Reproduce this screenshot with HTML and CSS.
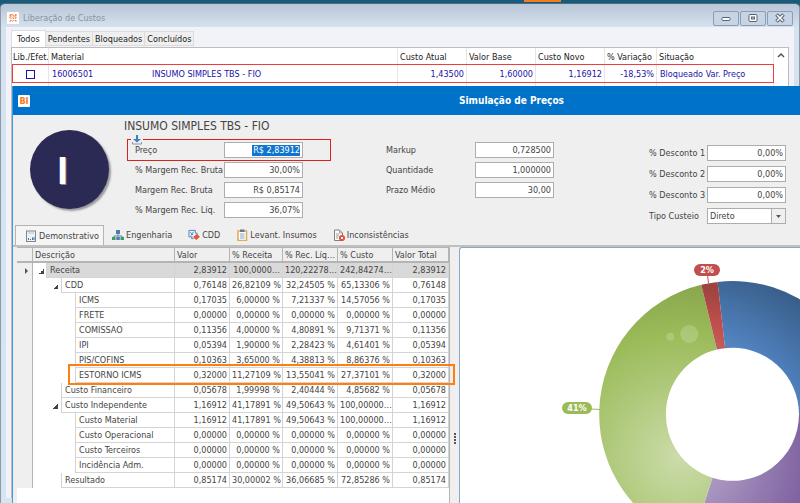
FILE: index.html
```html
<!DOCTYPE html>
<html lang="pt-BR">
<head>
<meta charset="utf-8">
<title>Liberação de Custos</title>
<link rel="stylesheet" href="styles.css">
</head>
<body>
<div class="desktop">
  <div class="app-strip"><span class="app-strip-mark"></span></div>

  <section class="window">
    <header class="window-title">
      <svg class="window-logo" viewBox="0 0 12 12" aria-hidden="true">
        <rect width="12" height="12" rx="1" fill="#fff"/>
        <path d="M2.500 2.500l2 2M5 2l2 2.500M8 2.500l1.500 1M2.500 5.500l2 1M5.500 5l1.500 2M9.500 5l-1.500 1.500M2.500 9.500l2-1.500M5.500 9.500l1-1.500M8 8l1.500 1.500M4.500 2.500l-2 2M9.500 2.500l-2 2" stroke="#f08a52" stroke-width="1.200" fill="none"/>
      </svg>
      <h1>Liberação de Custos</h1>
      <div class="window-buttons">
        <button type="button" aria-label="Minimizar"><svg viewBox="0 0 12 10"><rect x="2" y="4.500" width="8" height="3" rx="1" fill="#fff" stroke="#596375"/></svg></button>
        <button type="button" aria-label="Maximizar"><svg viewBox="0 0 12 10"><rect x="2" y="1.500" width="8" height="7" rx="1" fill="#fff" stroke="#596375"/><rect x="4.500" y="4" width="3" height="2" fill="#c5d2e0" stroke="#596375"/></svg></button>
        <button type="button" aria-label="Fechar"><svg viewBox="0 0 12 10"><path d="M2.500 1.500l7 7M9.500 1.500l-7 7" stroke="#596375" stroke-width="3.600"/><path d="M3 2l6 6M9 2l-6 6" stroke="#fff" stroke-width="1.600"/></svg></button>
      </div>
    </header>

    <div class="window-body">
      <nav class="filter-tabs">
        <button type="button" class="active">Todos</button>
        <button type="button">Pendentes</button>
        <button type="button">Bloqueados</button>
        <button type="button">Concluídos</button>
      </nav>
      <div class="cost-panel">
        <div class="cost-list">
          <table class="cost-table">
            <colgroup><col class="c-check"><col><col class="c-cost"><col class="c-cost"><col class="c-cost"><col class="c-var"><col class="c-status"></colgroup>
            <thead>
              <tr><th class="tight">Lib./Efet.</th><th>Material</th><th>Custo Atual</th><th>Valor Base</th><th>Custo Novo</th><th>% Variação</th><th>Situação</th></tr>
            </thead>
            <tbody>
              <tr>
                <td class="check"><input type="checkbox" aria-label="Liberar 16006501"></td>
                <td><span class="code">16006501</span>INSUMO SIMPLES TBS - FIO</td>
                <td class="num">1,43500</td><td class="num">1,60000</td><td class="num">1,16912</td><td class="num">-18,53%</td><td>Bloqueado Var. Preço</td>
              </tr>
              <tr class="blank"><td></td><td></td><td></td><td></td><td></td><td></td><td></td></tr>
            </tbody>
          </table>
          <span class="mark mark-row"></span>
        </div>
        <div class="scroll-column"><svg viewBox="0 0 8 6"><path d="M1 5l3-3 3 3" fill="none" stroke="#555" stroke-width="1.500"/></svg></div>
      </div>
    </div>
  </section>

  <section class="dialog">
    <header class="dialog-title">
      <span class="bi-logo">BI</span>
      <h2>Simulação de Preços</h2>
    </header>

    <div class="summary">
      <div class="avatar">I</div>
      <div class="product">
        <h3>INSUMO SIMPLES TBS - FIO</h3>
        <div class="fields">
          <label for="preco">Preço</label><input id="preco" class="selected" value="R$ 2,83912">
          <label for="mrb">% Margem Rec. Bruta</label><input id="mrb" value="30,00%">
          <label for="mb">Margem Rec. Bruta</label><input id="mb" value="R$ 0,85174">
          <label for="mrl">% Margem Rec. Líq.</label><input id="mrl" value="36,07%">
          <span class="mark mark-price"></span>
          <svg class="down-arrow" viewBox="0 0 12 10" aria-hidden="true"><rect width="12" height="10" fill="#efefef"/><path d="M5 0h2v4h3L6 7.500 2 4h3z" fill="#3f7fbd"/><path d="M1.500 7v2h9V7" fill="none" stroke="#8796a8"/></svg>
        </div>
      </div>
      <div class="fields fields-mid">
        <label for="mk">Markup</label><input id="mk" value="0,728500">
        <label for="qt">Quantidade</label><input id="qt" value="1,000000">
        <label for="pm">Prazo Médio</label><input id="pm" value="30,00">
      </div>
      <div class="fields fields-right">
        <label for="d1">% Desconto 1</label><input id="d1" value="0,00%">
        <label for="d2">% Desconto 2</label><input id="d2" value="0,00%">
        <label for="d3">% Desconto 3</label><input id="d3" value="0,00%">
        <label for="tc">Tipo Custeio</label>
        <span class="select-box"><select id="tc"><option>Direto</option></select><svg class="caret" viewBox="0 0 14 14" aria-hidden="true"><rect width="14" height="14" fill="#efefef"/><path d="M.5 0v14" stroke="#adadad"/><path d="M5 6h5L7.500 9z" fill="#555"/></svg></span>
      </div>
    </div>

    <nav class="view-tabs">
      <button type="button" class="active"><svg viewBox="0 0 12 12"><rect x="1.500" y="1" width="9" height="10.500" fill="#eef1f5" stroke="#7d8590"/><path d="M3 3h6" stroke="#b9c0ca"/><path d="M3.500 10V8M5.500 10V9M7.500 10V7.500M9 10V7" stroke="#3d6ea8"/></svg>Demonstrativo</button>
      <button type="button"><svg viewBox="0 0 12 12"><rect x="4" y="1" width="4" height="4" fill="#4a7db5"/><path d="M6 5v2M2 9V7h8v2" fill="none" stroke="#6d7f8f"/><rect x="0" y="8" width="3.500" height="3" fill="#3f9a6a"/><rect x="4.300" y="8" width="3.500" height="3" fill="#4a7db5"/><rect x="8.500" y="8" width="3.500" height="3" fill="#3f9a6a"/></svg>Engenharia</button>
      <button type="button"><svg viewBox="0 0 13 12"><path d="M1 1h7v3h2v3M1 1v7h4" fill="#e3eef8" stroke="#4f86bd"/><path d="M2.500 3l3 3M6 2.500l-3 4M4 8v2h2" fill="none" stroke="#4f86bd"/><path d="M9.500 5L13 8 9 11.500 5.500 8.500z" fill="#e0573a"/></svg>CDD</button>
      <button type="button"><svg viewBox="0 0 12 12"><rect x="2" y="2" width="8.500" height="9.500" fill="#fff" stroke="#e3ac4c" stroke-width="1.500"/><rect x="4" y="0.500" width="4.500" height="2.500" fill="#6d7783"/><path d="M4 5h4.500M4 7h4.500M4 9h4.500" stroke="#7fa5d0"/></svg>Levant. Insumos</button>
      <button type="button"><svg viewBox="0 0 12 12"><path d="M1.500 1h5l3 3v7.500h-8z" fill="#fafafa" stroke="#808080"/><path d="M6.500 1v3h3M3 5h3M3 7h3M3 9h2" fill="none" stroke="#a0a0a0"/><circle cx="9" cy="9" r="3" fill="#dd4b30"/><path d="M7.800 7.800l2.400 2.400M10.200 7.800l-2.400 2.400" stroke="#fff"/></svg>Inconsistências</button>
    </nav>

    <div class="content">
      <div class="tree-panel">
        <table class="tree">
          <colgroup><col class="t-ind"><col class="t-desc"><col class="t-a"><col class="t-b"><col class="t-a"><col class="t-a"><col class="t-c"></colgroup>
          <thead><tr><th></th><th>Descrição</th><th>Valor</th><th>% Receita</th><th>% Rec. Líq…</th><th>% Custo</th><th>Valor Total</th></tr></thead>
          <tbody>
            <tr class="current"><td><svg class="pointer" viewBox="0 0 4 6"><path d="M0 0l3 3-3 3z" fill="#555"/></svg></td><td class="l0 open"><span>Receita</span></td><td>2,83912</td><td>100,0000…</td><td>120,22278…</td><td>242,84274…</td><td>2,83912</td></tr>
            <tr><td></td><td class="l1 open"><span>CDD</span></td><td>0,76148</td><td>26,82109 %</td><td>32,24505 %</td><td>65,13306 %</td><td>0,76148</td></tr>
            <tr><td></td><td class="l2"><span>ICMS</span></td><td>0,17035</td><td>6,00000 %</td><td>7,21337 %</td><td>14,57056 %</td><td>0,17035</td></tr>
            <tr><td></td><td class="l2"><span>FRETE</span></td><td>0,00000</td><td>0,00000 %</td><td>0,00000 %</td><td>0,00000 %</td><td>0,00000</td></tr>
            <tr><td></td><td class="l2"><span>COMISSAO</span></td><td>0,11356</td><td>4,00000 %</td><td>4,80891 %</td><td>9,71371 %</td><td>0,11356</td></tr>
            <tr><td></td><td class="l2"><span>IPI</span></td><td>0,05394</td><td>1,90000 %</td><td>2,28423 %</td><td>4,61401 %</td><td>0,05394</td></tr>
            <tr><td></td><td class="l2"><span>PIS/COFINS</span></td><td>0,10363</td><td>3,65000 %</td><td>4,38813 %</td><td>8,86376 %</td><td>0,10363</td></tr>
            <tr><td></td><td class="l2"><span>ESTORNO ICMS</span></td><td>0,32000</td><td>11,27109 %</td><td>13,55041 %</td><td>27,37101 %</td><td>0,32000</td></tr>
            <tr><td></td><td class="l1"><span>Custo Financeiro</span></td><td>0,05678</td><td>1,99998 %</td><td>2,40444 %</td><td>4,85682 %</td><td>0,05678</td></tr>
            <tr><td></td><td class="l1 open"><span>Custo Independente</span></td><td>1,16912</td><td>41,17891 %</td><td>49,50643 %</td><td>100,00000…</td><td>1,16912</td></tr>
            <tr><td></td><td class="l2"><span>Custo Material</span></td><td>1,16912</td><td>41,17891 %</td><td>49,50643 %</td><td>100,00000…</td><td>1,16912</td></tr>
            <tr><td></td><td class="l2"><span>Custo Operacional</span></td><td>0,00000</td><td>0,00000 %</td><td>0,00000 %</td><td>0,00000 %</td><td>0,00000</td></tr>
            <tr><td></td><td class="l2"><span>Custo Terceiros</span></td><td>0,00000</td><td>0,00000 %</td><td>0,00000 %</td><td>0,00000 %</td><td>0,00000</td></tr>
            <tr><td></td><td class="l2"><span>Incidência Adm.</span></td><td>0,00000</td><td>0,00000 %</td><td>0,00000 %</td><td>0,00000 %</td><td>0,00000</td></tr>
            <tr><td></td><td class="l1"><span>Resultado</span></td><td>0,85174</td><td>30,00002 %</td><td>36,06685 %</td><td>72,85286 %</td><td>0,85174</td></tr>
          </tbody>
        </table>
        <span class="mark mark-icms"></span>
      </div>
      <div class="splitter"><i></i><i></i><i></i><i></i></div>
      <div class="chart-panel">
        <svg class="chart" viewBox="0 0 420 310" role="img" aria-label="Composição do preço">
          <defs>
            <radialGradient id="g" gradientUnits="userSpaceOnUse" cx="220" cy="209" r="200"><stop offset="0" stop-color="#cbdcaa"/><stop offset=".62" stop-color="#9bbb59"/><stop offset="1" stop-color="#7f9a48"/></radialGradient>
            <radialGradient id="b" gradientUnits="userSpaceOnUse" cx="220" cy="209" r="200"><stop offset="0" stop-color="#a5c0de"/><stop offset=".65" stop-color="#4f81bd"/><stop offset="1" stop-color="#385c87"/></radialGradient>
            <radialGradient id="r" gradientUnits="userSpaceOnUse" cx="220" cy="209" r="200"><stop offset="0" stop-color="#dfa6a4"/><stop offset=".68" stop-color="#c0504d"/><stop offset=".86" stop-color="#9f4340"/></radialGradient>
            <radialGradient id="p" gradientUnits="userSpaceOnUse" cx="220" cy="209" r="200"><stop offset="0" stop-color="#bfb1d0"/><stop offset=".62" stop-color="#8064a2"/><stop offset="1" stop-color="#644e80"/></radialGradient>
          </defs>
          <path fill="url(#b)" d="M257.600 33.900A133.200 133.200 0 0 1 405.700 166.300L339 166.300A66.500 66.500 0 0 0 265.100 100.200z"/>
          <path fill="url(#p)" d="M405.700 166.300A133.200 133.200 0 0 1 232.200 293.300L252.400 229.700A66.500 66.500 0 0 0 339 166.300z"/>
          <path fill="url(#g)" d="M232.200 293.300A133.200 133.200 0 0 1 241.300 36.800L256.900 101.600A66.500 66.500 0 0 0 252.400 229.700z"/>
          <path fill="url(#r)" d="M241.300 36.800A133.200 133.200 0 0 1 257.600 33.900L265.100 100.200A66.500 66.500 0 0 0 256.900 101.600z"/>
          <circle cx="229.300" cy="86" r="9" fill="#fff" opacity=".18"/>
          <circle cx="210.300" cy="88.700" r="4" fill="#fff" opacity=".18"/>
          <path d="M247.500 27l1 8" stroke="#c0504d"/>
          <path d="M131 161l9 .5" stroke="#9bbb59"/>
          <rect x="234" y="16" width="26" height="12" rx="6" fill="#c0504d"/>
          <rect x="102" y="154" width="30" height="12" rx="6" fill="#9bbb59"/>
          <text x="247" y="25">2%</text>
          <text x="117" y="163">41%</text>
        </svg>
      </div>
    </div>
  </section>
</div>
</body>
</html>
```
FILE: styles.css
```css
* { box-sizing: border-box; }

body {
  margin: 0;
  font: 9px/12px "DejaVu Sans Condensed", "Noto Sans", sans-serif;
  color: #444;
}

h1, h2, h3 { margin: 0; font-weight: normal; }

button, input, select { font: inherit; color: inherit; margin: 0; padding: 0; }

table { border-collapse: separate; border-spacing: 0; table-layout: fixed; width: 100%; }

th, td { padding: 0; font-weight: normal; text-align: left; white-space: nowrap; overflow: hidden; }

.desktop {
  position: relative;
  display: flex;
  flex-direction: column;
  height: 100vh;
  overflow: hidden;
  background: #185a7c;
}

.app-strip { height: 3px; padding-left: 524px; }
.app-strip-mark { display: block; width: 37px; height: 2px; background: #f47b20; }

/* Main window */
.window {
  flex: 1;
  display: flex;
  flex-direction: column;
  padding: 0 5px 5px;
  border: 1px solid #8c9aa8;
  border-top-color: #4e6c80;
  border-width: 1px 1px 0;
  border-radius: 5px 5px 0 0;
  background: linear-gradient(#b8c6d5, #d5e3f1 24px, #d7e5f3);
}

.window-title { display: flex; align-items: center; height: 23px; padding: 5px 1px 0; gap: 4px; }
.window-title h1 { flex: 1; font-size: 9px; color: #8b929c; }
.window-logo { width: 12px; height: 12px; }
.window-buttons { display: flex; gap: 1px; }
.window-buttons button {
  display: flex;
  align-items: center;
  justify-content: center;
  width: 26px;
  height: 15px;
  border: 1px solid #8d9db3;
  border-radius: 2px;
  background: #c6d4e3;
}
.window-buttons svg { width: 12px; height: 10px; }

.window-body { flex: 1; display: flex; flex-direction: column; padding: 3px 5px 0; background: #f2f2f9; }

.filter-tabs { display: flex; align-items: flex-end; height: 17px; }
.filter-tabs button {
  height: 15px;
  padding: 0 2px;
  border: 1px solid #dcdcdc;
  border-left: 0;
  background: #efefef;
  color: #222;
  margin-bottom: 1px;
}
.filter-tabs .active { height: 17px; padding: 0 5px; margin: 0; border: 1px solid #dcdcdc; border-bottom: 0; background: #fff; }

.cost-panel { flex: 1; display: flex; border: 1px solid #bdbdbd; background: #fff; }
.cost-list { position: relative; flex: 1; }
.scroll-column { width: 14px; padding: 4px 3px; }
.scroll-column svg { display: block; width: 8px; height: 6px; }
.cost-table th, .cost-table td { border-right: 1px solid #e6e6e6; padding: 0 3px; }
.cost-table th { height: 17px; padding: 0 2px; color: #222; }
.cost-table td { height: 18px; color: #1b12a8; }
.cost-table th.tight { padding: 0 1px; }
.cost-table .blank td { height: 12px; }
.cost-table .num { text-align: right; padding: 0 2px; }
.cost-table .check { text-align: center; padding: 0; }
.code { display: inline-block; width: 100px; }
.c-check { width: 37px; }
.c-cost { width: 69px; }
.c-var { width: 52px; }
.c-status { width: 117px; }

input[type="checkbox"] {
  appearance: none;
  display: block;
  width: 9px;
  height: 9px;
  margin: 0 auto;
  border: 1px solid #1b12a8;
  background: #fff;
}

/* Outlines drawn over rows to call attention to them */
.mark { position: absolute; pointer-events: none; }
.mark-row { top: 16px; left: 0; right: 0; height: 19px; border: 1px solid #f03c3c; }
.mark-price { top: -3px; left: -8px; right: -28px; height: 22px; border: 1px solid #e02020; }
.mark-icms { top: 117px; left: 51px; right: -6px; height: 21px; border: 2px solid #ff7f0e; }

/* Simulation dialog */
.dialog {
  position: absolute;
  top: 86px;
  right: 0;
  bottom: 0;
  left: 12px;
  display: flex;
  flex-direction: column;
  border-left: 1px solid #3f9be0;
  background: #efefef;
}

.dialog-title { display: flex; align-items: center; height: 29px; padding: 0 5px; background: #0072c9; color: #fff; }
.dialog-title h2 { flex: 1; padding-left: 198px; text-align: center; font-size: 10px; font-weight: bold; }
.bi-logo {
  width: 12px;
  height: 12px;
  border-radius: 1px;
  background: #fff;
  color: #f47b20;
  font-weight: bold;
  text-align: center;
}

.summary { display: flex; align-items: flex-start; height: 110px; padding: 3px 14px 0 17px; }

.avatar {
  width: 79px;
  height: 79px;
  margin: 12px 15px 0 0;
  padding-right: 14px;
  border-radius: 50%;
  background: #2b2a55;
  box-shadow: 2px 2px 2px #999;
  color: #fff;
  font: bold 38px/82px "Liberation Sans", sans-serif;
  text-align: center;
  text-shadow: 1px 1px 0 #888;
}

.product { width: 179px; margin-right: 83px; }
.product h3 { height: 24px; font-size: 12px; line-height: 16px; white-space: nowrap; }
.product .fields { margin-left: 11px; }

.fields {
  position: relative;
  display: grid;
  grid-template-columns: 89px 79px;
  grid-auto-rows: 16px;
  row-gap: 4px;
  align-items: center;
  white-space: nowrap;
}
.fields-mid { margin-top: 24px; }
.fields-right { grid-template-columns: 58px 79px; row-gap: 5px; margin: 27px 0 0 auto; }

.fields input, .fields select {
  width: 100%;
  height: 16px;
  padding: 0 2px;
  border: 1px solid #adadad;
  border-radius: 0;
  background: #fff;
  text-align: right;
}
.fields input.selected {
  color: #fff;
  background: linear-gradient(#0f75d0, #0f75d0) right 2px center / 48px 11px no-repeat #fff;
}
.select-box { position: relative; display: block; }
.fields select { appearance: none; display: block; text-align: left; }
.caret { position: absolute; top: 1px; right: 1px; width: 14px; height: 14px; pointer-events: none; }
.down-arrow { position: absolute; top: -7px; left: -4px; width: 12px; height: 10px; }

.view-tabs { display: flex; height: 22px; padding-left: 2px; border-bottom: 2px solid #c0c0c0; }
.view-tabs button {
  display: flex;
  align-items: center;
  gap: 2px;
  height: 20px;
  padding: 0 8px;
  border: 0;
  background: none;
}
.view-tabs .active { padding: 0 4px 0 9px; border: 1px solid #b4b4b4; border-bottom: 0; background: #f5f5f5; }
.view-tabs svg { width: 12px; height: 12px; }

.content { flex: 1; display: flex; min-height: 0; padding-left: 4px; }

.tree-panel { position: relative; width: 433px; background: #fff; border-right: 1px solid #b4b4b4; }
.tree th { height: 16px; padding: 0 2px; background: #efefef; border: 1px solid #b4b4b4; border-left: 0; border-bottom-width: 2px; }
.tree td { height: 15px; padding: 0 2px; line-height: 14px; text-align: right; border-right: 1px solid #d4d4d4; border-bottom: 1px solid #d4d4d4; }
.tree td:first-child { background: #efefef; border-bottom: 0; border-right-color: #b4b4b4; }
.tree td:nth-child(2) { position: relative; padding: 0; text-align: left; border-bottom: 0; }
.tree td span { display: block; padding-left: 3px; border-left: 1px solid #d4d4d4; border-bottom: 1px solid #d4d4d4; }
.tree .current td { background: #d9d9d9; }
.tree .current td:first-child { background: #efefef; }
.tree .current td:nth-child(2) { background: #fff; }
.tree .current span { background: #d9d9d9; }
.pointer { display: block; width: 4px; height: 6px; margin-left: 6px; }
.l0 span { margin-left: 13px; }
.l1 span { margin-left: 28px; }
.l2 span { margin-left: 42px; }
.open::before {
  content: "";
  position: absolute;
  top: 6px;
  left: 6px;
  width: 5px;
  height: 5px;
  background: linear-gradient(to bottom right, transparent 50%, #444 0);
}
.l1.open::before { left: 20px; }
.t-ind { width: 16px; }
.t-desc { width: 142px; }
.t-a { width: 55px; }
.t-b { width: 53px; }

.splitter { display: flex; flex-direction: column; align-items: center; justify-content: center; gap: 1px; width: 9px; padding-top: 126px; }
.splitter i { width: 2px; height: 2px; background: #555; }

.chart-panel { flex: 1; overflow: hidden; border: 1px solid #8aa7cf; border-width: 1px 0 0 1px; border-radius: 3px 0 0 0; background: #fff; }
.chart { display: block; width: 420px; height: 310px; }
.chart text { fill: #fff; font-weight: bold; text-anchor: middle; }
```
